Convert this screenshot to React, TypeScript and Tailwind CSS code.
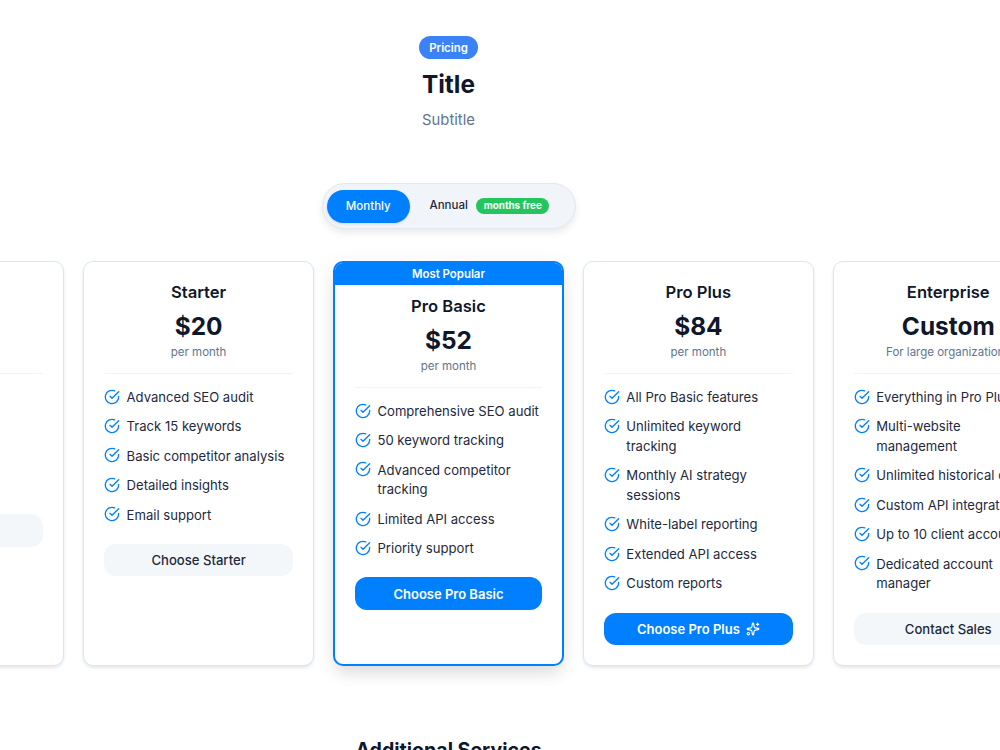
import React, { useState } from 'react';
import { Sparkles } from "lucide-react";
import clsx from "clsx";

interface Plan {
  name: string;
  price: string;
  note: string;
  features: string[];
  cta: string;
  popular?: boolean;
  primary?: boolean;
  sparkle?: boolean;
}

const plans: Plan[] = [
  {
    name: "Free",
    price: "$0",
    note: "per month",
    features: ["Basic SEO audit", "Track 5 keywords", "Weekly insights", "Community help"],
    cta: "Choose Free",
  },
  {
    name: "Starter",
    price: "$20",
    note: "per month",
    features: ["Advanced SEO audit", "Track 15 keywords", "Basic competitor analysis", "Detailed insights", "Email support"],
    cta: "Choose Starter",
  },
  {
    name: "Pro Basic",
    price: "$52",
    note: "per month",
    features: ["Comprehensive SEO audit", "50 keyword tracking", "Advanced competitor tracking", "Limited API access", "Priority support"],
    cta: "Choose Pro Basic",
    popular: true,
    primary: true,
  },
  {
    name: "Pro Plus",
    price: "$84",
    note: "per month",
    features: ["All Pro Basic features", "Unlimited keyword tracking", "Monthly AI strategy sessions", "White-label reporting", "Extended API access", "Custom reports"],
    cta: "Choose Pro Plus",
    primary: true,
    sparkle: true,
  },
  {
    name: "Enterprise",
    price: "Custom",
    note: "For large organizations",
    features: ["Everything in Pro Plus", "Multi-website management", "Unlimited historical data", "Custom API integration", "Up to 10 client accounts", "Dedicated account manager"],
    cta: "Contact Sales",
  },
];

function CheckIcon() {
  return (
    <svg
      className="w-[16px] h-[16px] mt-[0.8px] shrink-0 text-[#0080ff]"
      viewBox="0 0 24 24"
      fill="none"
      stroke="currentColor"
      strokeWidth="2"
      strokeLinecap="round"
      strokeLinejoin="round"
    >
      <path d="M22 11.08V12a10 10 0 1 1-5.93-9.14" />
      <path d="m9 11 3 3L22 4" />
    </svg>
  );
}

function PlanCard({ plan }: { plan: Plan }) {
  return (
    <div
      className={clsx(
        "w-[230.4px] shrink-0 h-[404.5px] bg-white rounded-[10px] overflow-hidden",
        plan.popular
          ? "border-2 border-[#0080ff] shadow-[0_10px_15px_-3px_rgba(0,0,0,0.1),0_4px_24px_0px_rgba(0,0,0,0.06)]"
          : "border border-[#d5e8fb] shadow-[0_2px_4px_-1px_rgba(0,0,0,0.14)]"
      )}
    >
      {plan.popular && (
        <div className="h-[22px] bg-[#0080ff] text-white text-[11.4px] leading-[22px] font-semibold text-center">
          Most Popular
        </div>
      )}
      <div className={clsx("px-[19.5px]", plan.popular ? "pt-[8.4px]" : "pt-[17.4px]")}>
        <div className="text-center pb-[12.4px] border-b border-slate-100">
          <h3 className="text-[16.6px] leading-[27px] font-semibold text-slate-900">{plan.name}</h3>
          <div className="mt-[2.6px] text-[24.4px] leading-[35px] font-bold text-slate-900">{plan.price}</div>
          <p className="text-[11.5px] leading-[17px] text-slate-500 whitespace-nowrap">{plan.note}</p>
        </div>
        <ul className="mt-[13.4px] flex flex-col gap-[9.8px]">
          {plan.features.map((feature) => (
            <li key={feature} className="flex items-start gap-[6.7px] text-[13.1px] leading-[19.65px] text-slate-800">
              <CheckIcon />
              <span>{feature}</span>
            </li>
          ))}
        </ul>
        <button
          className={clsx(
            "mt-[18.6px] w-full h-[32.6px] pt-[1px] rounded-[12px] flex items-center justify-center gap-[6px]",
            plan.primary
              ? "bg-[#0080ff] text-white text-[13px] font-semibold"
              : "bg-[#f3f7fa] text-slate-800 text-[13.1px] font-medium"
          )}
        >
          {plan.cta}
          {plan.sparkle && <Sparkles className="w-[14px] h-[14px]" />}
        </button>
      </div>
    </div>
  );
}

export default function App() {
  const [annual, setAnnual] = useState(false);

  return (
    <div className="w-[1000px] h-[750px] overflow-hidden bg-white font-['Inter',sans-serif]">
      <div className="w-[897px] pt-[36px] flex flex-col items-center">
        <span className="h-[23px] px-[10px] rounded-full bg-[#3b82f6] text-white text-[11.4px] leading-[24px] font-semibold">
          Pricing
        </span>
        <h1 className="mt-[8px] text-[24.4px] leading-[35px] font-bold text-slate-900">Title</h1>
        <p className="mt-[6px] text-[14.8px] leading-[25px] text-slate-500">Subtitle</p>

        <div className="mt-[50px] w-[254px] h-[46px] px-[4px] flex items-center rounded-full bg-slate-100 border border-slate-200 shadow-[0_4px_8px_-1px_rgba(0,0,0,0.1)]">
          <button
            onClick={() => setAnnual(false)}
            className={clsx(
              "w-[83.5px] h-[33px] pt-[1px] shrink-0 rounded-full text-[11.5px] font-medium",
              annual ? "text-slate-800" : "bg-[#0080ff] text-white shadow-sm"
            )}
          >
            Monthly
          </button>
          <button
            onClick={() => setAnnual(true)}
            className="ml-[19.5px] flex items-center gap-[8.5px] text-[11.5px] font-medium text-slate-800"
          >
            Annual
            <span className="h-[16px] px-[7.5px] rounded-full bg-[#22c55e] text-white text-[9.8px] leading-[16px] font-bold whitespace-nowrap">
              months free
            </span>
          </button>
        </div>
      </div>

      <div className="mt-[32px] ml-[-166.5px] flex gap-[19.5px]">
        {plans.map((plan) => (
          <PlanCard key={plan.name} plan={plan} />
        ))}
      </div>

      <div className="w-[897px] mt-[71px] text-center">
        <h2 className="text-[19.6px] leading-[27.4px] font-bold text-slate-900">Additional Services</h2>
      </div>
    </div>
  );
}
